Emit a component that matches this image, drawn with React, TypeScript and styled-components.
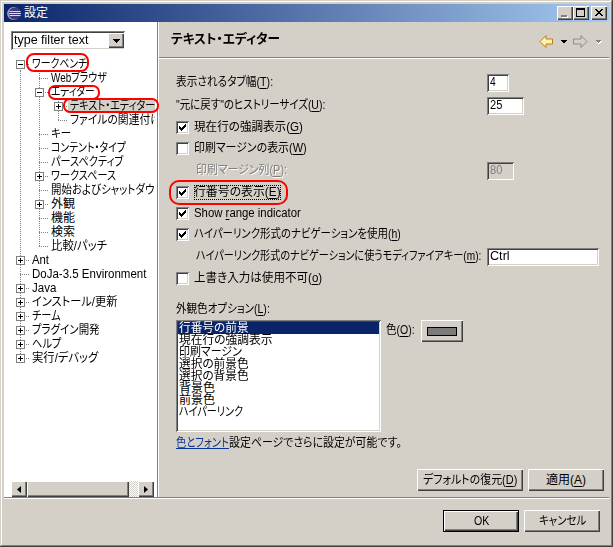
import React, { useLayoutEffect, useRef, useState } from "react";
import styled, { createGlobalStyle, css } from "styled-components";

const face = "#d4d0c8";
const shadow = "#808080";
const dark = "#404040";
const navy = "#0a246a";

const GlobalStyle = createGlobalStyle`
  * { box-sizing: border-box; }
  html, body { margin: 0; background: ${face}; }
  body {
    font: 12px/14px "Liberation Sans", "Noto Sans CJK JP", sans-serif;
    font-feature-settings: "palt";
    color: #000;
    overflow: hidden;
  }
`;

const raised = css`
  background: ${face};
  box-shadow: inset 1px 1px #fff, inset -1px -1px ${dark}, inset -2px -2px ${shadow};
`;
const sunken = css`
  background: #fff;
  box-shadow: inset 1px 1px ${shadow}, inset -1px -1px #fff, inset 2px 2px ${dark}, inset -2px -2px ${face};
`;

/* ---------- text set to a fixed advance width ---------- */
const TextBox = styled.span<{ $w: number }>`
  display: inline-block;
  flex: none;
  width: ${(p) => p.$w}px;
  white-space: pre;
`;
const TextInner = styled.span`
  display: inline-block;
  transform-origin: 0 50%;
`;
function Fit({ w, children }: { w: number; children: React.ReactNode }) {
  const ref = useRef<HTMLSpanElement>(null);
  const [scale, setScale] = useState(1);
  useLayoutEffect(() => {
    if (ref.current) setScale(w / ref.current.offsetWidth);
  }, [w]);
  return (
    <TextBox $w={w}>
      <TextInner ref={ref} style={{ transform: `scaleX(${scale})` }}>{children}</TextInner>
    </TextBox>
  );
}

const Key = styled.span`
  text-decoration: underline;
  text-underline-offset: 2px;
  text-decoration-thickness: 1px;
`;

/* ---------- window ---------- */
const Window = styled.div`
  width: 613px;
  height: 547px;
  padding: 4px;
  display: flex;
  flex-direction: column;
  background: ${face};
  box-shadow: inset -1px -1px ${dark}, inset 1px 1px ${face}, inset -2px -2px ${shadow}, inset 2px 2px #fff;
`;
const TitleBar = styled.header`
  flex: none;
  height: 18px;
  display: flex;
  align-items: center;
  padding: 0 2px 0 3px;
  color: #fff;
  background: linear-gradient(90deg, ${navy}, #a6caf0);
`;
const Title = styled.div`
  flex: 1;
  margin-left: 2px;
  line-height: 18px;
`;
const CaptionButton = styled.div<{ $gap?: boolean }>`
  ${raised}
  width: 16px;
  height: 14px;
  margin-left: ${(p) => (p.$gap ? 2 : 0)}px;
  svg { display: block; }
`;
const Main = styled.div`
  flex: none;
  height: 477px;
  display: flex;
  border-bottom: 1px solid #fff;
  box-shadow: inset 0 -1px ${shadow};
  padding-bottom: 1px;
`;

/* ---------- sidebar ---------- */
const Sidebar = styled.aside`
  position: relative;
  flex: none;
  width: 154px;
  background: #fff;
  border-right: 1px solid ${shadow};
  box-shadow: 1px 0 #fff;
  padding: 9px 0 0 7px;
  display: flex;
  flex-direction: column;
`;
const Combo = styled.div`
  ${sunken}
  width: 114px;
  height: 19px;
  padding: 2px 1px 2px 3px;
  display: flex;
  justify-content: space-between;
  line-height: 15px;
  margin-bottom: 7px;
`;
const BoxButton = styled.div`
  ${raised}
  width: 16px;
  height: 100%;
  display: flex;
  align-items: center;
  justify-content: center;
  flex: none;
`;
const Tree = styled.div`
  flex: 1;
  width: 144px;
  overflow: hidden;
`;
const TreeRow = styled.div`
  display: flex;
  height: 14px;
`;
type Arm = "none" | "all" | "upper" | "lower";
const dots = `repeating-linear-gradient(180deg, ${shadow} 0 1px, transparent 1px 2px)`;
const hdots = `repeating-linear-gradient(90deg, ${shadow} 0 1px, transparent 1px 2px)`;
const GuideCell = styled.span<{ $arm: Arm; $stub: boolean }>`
  flex: none;
  width: 19px;
  height: 14px;
  padding: 3px 0 0 5px;
  background-image: ${dots}, ${hdots};
  background-repeat: no-repeat;
  background-size:
    1px ${(p) => ({ none: 0, all: 14, upper: 8, lower: 7 })[p.$arm]}px,
    ${(p) => (p.$stub ? 10 : 0)}px 1px;
  background-position: 9px ${(p) => (p.$arm === "lower" ? 7 : 0)}px, 9px 7px;
`;
const Expander = styled.svg`
  display: block;
  background: #fff;
`;
const NodeLabel = styled.span<{ $selected?: boolean }>`
  padding-left: 2px;
  flex: none;
  height: 14px;
  line-height: 14px;
  background: ${(p) => (p.$selected ? face : "transparent")};
`;

type Node = { t: string; w: number; g: [Arm, boolean][]; box?: "+" | "-"; sel?: boolean };
const v: [Arm, boolean] = ["all", false];
const b: [Arm, boolean] = ["all", true];
const e: [Arm, boolean] = ["upper", true];
const nodes: Node[] = [
  { t: "ワークベンチ", w: 55, g: [["lower", true]], box: "-" },
  { t: "Webブラウザ", w: 56, g: [v, b] },
  { t: "エディター", w: 44, g: [v, b], box: "-" },
  { t: "テキスト・エディター", w: 85, g: [v, v, b], box: "+", sel: true },
  { t: "ファイルの関連付け", w: 91, g: [v, v, e] },
  { t: "キー", w: 20, g: [v, b] },
  { t: "コンテント・タイプ", w: 75, g: [v, b] },
  { t: "パースペクティブ", w: 72, g: [v, b] },
  { t: "ワークスペース", w: 65, g: [v, b], box: "+" },
  { t: "開始およびシャットダウン", w: 113, g: [v, b] },
  { t: "外観", w: 24, g: [v, b], box: "+" },
  { t: "機能", w: 24, g: [v, b] },
  { t: "検索", w: 24, g: [v, b] },
  { t: "比較/パッチ", w: 56, g: [v, e] },
  { t: "Ant", w: 17, g: [b], box: "+" },
  { t: "DoJa-3.5 Environment", w: 114, g: [b] },
  { t: "Java", w: 24, g: [b], box: "+" },
  { t: "インストール/更新", w: 85, g: [b], box: "+" },
  { t: "チーム", w: 29, g: [b], box: "+" },
  { t: "プラグイン開発", w: 68, g: [b], box: "+" },
  { t: "ヘルプ", w: 29, g: [b], box: "+" },
  { t: "実行/デバッグ", w: 66, g: [e], box: "+" },
];

const ScrollBar = styled.div`
  flex: none;
  width: 143px;
  height: 16px;
  display: flex;
  background: repeating-conic-gradient(#fff 0 25%, ${face} 0 50%) 0 0 / 2px 2px;
`;
const Thumb = styled.div`
  ${raised}
  width: 102px;
`;
const ScrollGap = styled.div`
  flex: 1;
`;

/* ---------- content ---------- */
const Content = styled.section`
  flex: 1;
  margin-left: 1px;
  display: flex;
  flex-direction: column;
`;
const PageHeader = styled.div`
  flex: none;
  height: 37px;
  padding: 0 6px 3px 12px;
  display: flex;
  align-items: center;
  justify-content: space-between;
  border-bottom: 1px solid #fff;
  box-shadow: inset 0 -1px ${shadow};
  font-size: 13px;
  font-weight: 700;
`;
const NavIcons = styled.svg`
  margin-top: 5px;
`;
const Form = styled.div`
  flex: 1;
  padding: 15px 5px 0 17px;
  position: relative;
`;
const Row = styled.div<{ $h: number; $indent?: number; $disabled?: boolean }>`
  height: ${(p) => p.$h}px;
  padding-left: ${(p) => p.$indent ?? 0}px;
  display: flex;
  align-items: flex-start;
  line-height: 17px;
  ${(p) => p.$disabled && css`color: ${shadow}; text-shadow: 1px 1px #fff;`}
`;
const FieldLabel = styled.div<{ $w: number }>`
  width: ${(p) => p.$w}px;
  flex: none;
`;
const Input = styled.div<{ $w: number; $disabled?: boolean }>`
  ${sunken}
  width: ${(p) => p.$w}px;
  height: 18px;
  padding: 0 3px;
  line-height: 17px;
  ${(p) => p.$disabled && css`background: ${face}; text-shadow: none;`}
`;
const Box = styled.span`
  ${sunken}
  width: 13px;
  height: 13px;
  margin: 0 5px 0 0;
  flex: none;
  svg { display: block; }
`;
const CheckText = styled.span<{ $focus?: boolean }>`
  line-height: 15px;
  height: 15px;
  margin-top: -1px;
  ${(p) => p.$focus && css`outline: 1px dotted #000; outline-offset: -1px;`}
`;
const ListArea = styled.div`
  display: flex;
  align-items: flex-start;
`;
const ListBox = styled.div`
  ${sunken}
  width: 205px;
  height: 112px;
  padding: 2px;
`;
const Item = styled.div<{ $selected?: boolean }>`
  height: 12px;
  line-height: 12px;
  padding-left: 1px;
  ${(p) => p.$selected && css`background: ${navy}; color: #fff;`}
`;
const ColorLabel = styled.div`
  width: 35px;
  margin: 3px 0 0 5px;
`;
const Button = styled.div<{ $w: number; $primary?: boolean }>`
  ${raised}
  width: ${(p) => p.$w}px;
  height: 22px;
  display: flex;
  align-items: center;
  justify-content: center;
  ${(p) => p.$primary && css`
    border: 1px solid #000;
  `}
`;
const Swatch = styled.div`
  width: 30px;
  height: 9px;
  border: 1px solid #000;
  background: #7b7b7b;
`;
const Note = styled.div`
  height: 18px;
  padding-top: 4px;
  display: flex;
`;
const Link = styled.span`
  color: #0a3399;
  height: 13px;
  border-bottom: 1px solid #0a3399;
`;
const PageButtons = styled.div`
  display: flex;
  gap: 5px;
  justify-content: flex-end;
  margin-top: 19px;
`;
const Footer = styled.footer`
  display: flex;
  gap: 5px;
  justify-content: flex-end;
  padding: 11px 9px 0 0;
`;

/* red marker drawn over the controls */
const Marker = styled.div<{ $x: number; $y: number; $w: number; $h: number; $r: number }>`
  position: absolute;
  z-index: 2;
  left: ${(p) => p.$x}px;
  top: ${(p) => p.$y}px;
  width: ${(p) => p.$w}px;
  height: ${(p) => p.$h}px;
  border: 2px solid #f00;
  border-radius: ${(p) => p.$r}px;
`;

function Check({ on }: { on?: boolean }) {
  return (
    <Box>
      {on && (
        <svg width="13" height="13" shapeRendering="crispEdges">
          <path d="M3 5h1v1h1v1h1v-1h1v-1h1v-1h1v-1h1v3h-1v1h-1v1h-1v1h-1v1h-1v-1h-1v-1h-1z" />
        </svg>
      )}
    </Box>
  );
}

function Logo() {
  return (
    <svg width="15" height="16" viewBox="0 0 15 16">
      <circle cx="6.6" cy="8.500" r="6.500" fill="#a59ac4" />
      <circle cx="7.800" cy="8.500" r="6.100" fill="#413a78" />
      <path d="M2.500 6.500h11M2 8.500h12M2.500 10.500h11" stroke="#d6d6f2" strokeWidth="1" />
    </svg>
  );
}

function HistoryNav() {
  return (
    <NavIcons width="64" height="15" viewBox="0 0 64 15">
      <path d="M1 7.500 7 1.500v3.500h6.500v5H7v3.500z" fill="#fff3b0" stroke="#c27b0c" />
      <path d="M22 6h6v1h-1v1h-1v1h-2v-1h-1v-1h-1z" shapeRendering="crispEdges" />
      <path d="M48 7.500 42 1.500v3.500h-7.500v5H42v3.500z" fill="none" stroke="#8c8c8c" />
      <path d="M58 7h5v1h-1v1h-1v1h-2v-1h-1z" fill="#fff" shapeRendering="crispEdges" />
      <path d="M57 6h5v1h-1v1h-1v1h-1v-1h-1v-1h-1z" fill="#808080" shapeRendering="crispEdges" />
    </NavIcons>
  );
}

const Paren = ({ k, end = "" }: { k: string; end?: string }) => <>(<Key>{k}</Key>){end}</>;

const colors: [string, number][] = [
  ["行番号の前景", 70],
  ["現在行の強調表示", 94],
  ["印刷マージン", 63],
  ["選択の前景色", 70],
  ["選択の背景色", 70],
  ["背景色", 36],
  ["前景色", 36],
  ["ハイパーリンク", 64],
];

export default function App() {
  return (
    <>
      <GlobalStyle />
      <Window>
        <TitleBar>
          <Logo />
          <Title><Fit w={24}>設定</Fit></Title>
          <CaptionButton>
            <svg width="16" height="14"><path d="M5 10h6v2H5z" fill="#fff" /><path d="M4 9h6v2H4z" fill="#808080" /></svg>
          </CaptionButton>
          <CaptionButton>
            <svg width="16" height="14"><path d="M3 2h9v9H3zM4 4v6h7V4z" fillRule="evenodd" /></svg>
          </CaptionButton>
          <CaptionButton $gap>
            <svg width="16" height="14" shapeRendering="crispEdges">
              <path d="M4 3h2v1h1v1h2v-1h1v-1h2v1h-1v1h-1v1h-1v1h1v1h1v1h1v1h-2v-1h-1v-1h-2v1h-1v1h-2v-1h1v-1h1v-1h1v-1h-1v-1h-1v-1h-1z" />
            </svg>
          </CaptionButton>
        </TitleBar>

        <Main>
          <Sidebar>
            <Combo>
              <Fit w={74}>type filter text</Fit>
              <BoxButton>
                <svg width="7" height="4" shapeRendering="crispEdges"><path d="M0 0h7v1H6v1H5v1H4v1H3V3H2V2H1V1H0z" /></svg>
              </BoxButton>
            </Combo>
            <Tree>
              {nodes.map((n) => (
                <TreeRow key={n.t}>
                  {n.g.map(([arm, stub], i) => (
                    <GuideCell key={i} $arm={arm} $stub={stub}>
                      {n.box && i === n.g.length - 1 && (
                        <Expander width="9" height="9" shapeRendering="crispEdges">
                          <path d="M0 0h9v9H0zM1 1v7h7V1z" fill={shadow} fillRule="evenodd" />
                          <path d={n.box === "+" ? "M2 4h5v1H2zM4 2h1v5H4z" : "M2 4h5v1H2z"} />
                        </Expander>
                      )}
                    </GuideCell>
                  ))}
                  <NodeLabel $selected={n.sel}><Fit w={n.w}>{n.t}</Fit></NodeLabel>
                </TreeRow>
              ))}
            </Tree>
            <ScrollBar>
              <BoxButton><svg width="4" height="7"><path d="M4 0v7L0 3.500z" /></svg></BoxButton>
              <Thumb />
              <ScrollGap />
              <BoxButton><svg width="4" height="7"><path d="M0 0v7L4 3.500z" /></svg></BoxButton>
            </ScrollBar>
            <Marker $x={22} $y={31} $w={63} $h={19} $r={8} />
            <Marker $x={44} $y={63} $w={52} $h={15} $r={7} />
            <Marker $x={59} $y={76} $w={96} $h={15} $r={7} />
          </Sidebar>

          <Content>
            <PageHeader>
              <Fit w={109}>テキスト・エディター</Fit>
              <HistoryNav />
            </PageHeader>
            <Form>
              <Row $h={23}>
                <FieldLabel $w={311}><Fit w={97}>表示されるタブ幅<Paren k="T" end=":" /></Fit></FieldLabel>
                <Input $w={22}><Fit w={6}>4</Fit></Input>
              </Row>
              <Row $h={24}>
                <FieldLabel $w={311}><Fit w={149}>"元に戻す"のヒストリーサイズ<Paren k="U" end=":" /></Fit></FieldLabel>
                <Input $w={37}><Fit w={12}>25</Fit></Input>
              </Row>
              <Row $h={21}><Check on /><CheckText><Fit w={109}>現在行の強調表示<Paren k="G" /></Fit></CheckText></Row>
              <Row $h={20}><Check /><CheckText><Fit w={113}>印刷マージンの表示<Paren k="W" /></Fit></CheckText></Row>
              <Row $h={24} $indent={20} $disabled>
                <FieldLabel $w={291}><Fit w={91}>印刷マージン列<Paren k="P" end=":" /></Fit></FieldLabel>
                <Input $w={27} $disabled><Fit w={12}>80</Fit></Input>
              </Row>
              <Row $h={21}><Check on /><CheckText $focus><Fit w={87}>行番号の表示<Paren k="E" /></Fit></CheckText></Row>
              <Row $h={21}><Check on /><CheckText><Fit w={107}>Show <Key>r</Key>ange indicator</Fit></CheckText></Row>
              <Row $h={20}><Check on /><CheckText><Fit w={207}>ハイパーリンク形式のナビゲーションを使用<Paren k="h" /></Fit></CheckText></Row>
              <Row $h={24} $indent={20}>
                <FieldLabel $w={291}><Fit w={285}>ハイパーリンク形式のナビゲーションに使うモディファイアキー<Paren k="m" end=":" /></Fit></FieldLabel>
                <Input $w={112}><Fit w={20}>Ctrl</Fit></Input>
              </Row>
              <Row $h={29}><Check /><CheckText><Fit w={128}>上書き入力は使用不可<Paren k="o" /></Fit></CheckText></Row>
              <Row $h={19}><Fit w={94}>外観色オプション<Paren k="L" end=":" /></Fit></Row>
              <ListArea>
                <ListBox>
                  {colors.map(([t, w], i) => <Item key={t} $selected={i === 0}><Fit w={w}>{t}</Fit></Item>)}
                </ListBox>
                <ColorLabel><Fit w={29}>色<Paren k="O" end=":" /></Fit></ColorLabel>
                <Button $w={42}><Swatch /></Button>
              </ListArea>
              <Note>
                <Link><Fit w={53}>色とフォント</Fit></Link>
                <Fit w={173}>設定ページでさらに設定が可能です。</Fit>
              </Note>
              <PageButtons>
                <Button $w={106}><Fit w={94}>デフォルトの復元<Paren k="D" /></Fit></Button>
                <Button $w={76}><Fit w={40}>適用<Paren k="A" /></Fit></Button>
              </PageButtons>
              <Marker $x={10} $y={121} $w={119} $h={25} $r={10} />
            </Form>
          </Content>
        </Main>

        <Footer>
          <Button $w={76} $primary><Fit w={15}>OK</Fit></Button>
          <Button $w={76}><Fit w={47}>キャンセル</Fit></Button>
        </Footer>
      </Window>
    </>
  );
}
